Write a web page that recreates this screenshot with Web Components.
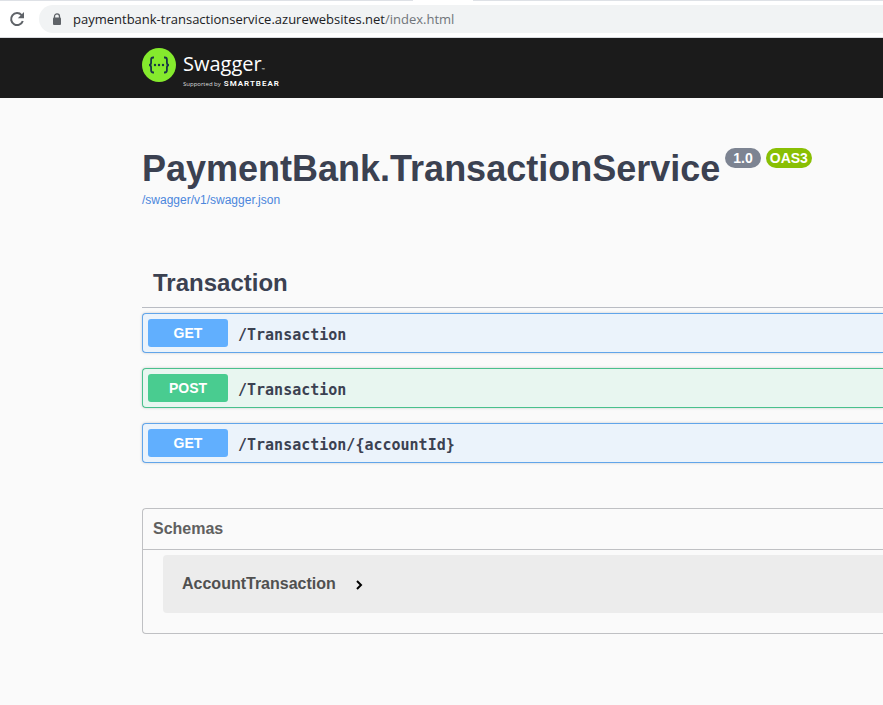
<!DOCTYPE html>
<html lang="en">
<head>
<meta charset="utf-8">
<title>Swagger UI</title>
<style>
body{margin:0;background:#fafafa;color:#3b4151;font-family:"Liberation Sans",Arial,sans-serif;min-height:100vh;overflow-x:hidden}
main{display:block;padding:49px 0 48px 142px}
</style>
</head>
<body>
<browser-bar host="paymentbank-transactionservice.azurewebsites.net" path="/index.html"></browser-bar>
<swagger-topbar></swagger-topbar>
<main>
  <api-info version="1.0" spec="OAS3" href="/swagger/v1/swagger.json">PaymentBank.TransactionService</api-info>
  <api-tag name="Transaction">
    <api-operation method="GET">/Transaction</api-operation>
    <api-operation method="POST">/Transaction</api-operation>
    <api-operation method="GET">/Transaction/{accountId}</api-operation>
  </api-tag>
  <api-schemas>
    <api-model>AccountTransaction</api-model>
  </api-schemas>
</main>
<script>
function define(name, html, setup) {
  const template = document.createElement('template');
  template.innerHTML = html;
  customElements.define(name, class extends HTMLElement {
    constructor() {
      super();
      this.attachShadow({mode: 'open'}).append(template.content.cloneNode(true));
    }
    connectedCallback() {
      if (setup) setup(this, s => this.shadowRoot.querySelector(s));
    }
  });
}

define('browser-bar', `
<style>
:host{display:block;background:#fff;border-bottom:1px solid #dadce0}
.tabs{display:flex;height:1px}
.tabs i{background:#dee1e6;width:413px}
.tabs i:last-child{margin-left:60px;flex:1}
.bar{display:flex;align-items:center;padding:4px 0 4px 8px;gap:13px}
button{border:0;background:none;padding:0;width:18px;height:18px;display:block}
svg{display:block}
.site{flex:1;display:flex;align-items:center;gap:11px;height:28px;padding-left:13px;background:#f1f3f4;border-radius:14px 0 0 14px}
a{font:13px/20px "Open Sans","Noto Sans",sans-serif;color:#202124;text-decoration:none;white-space:nowrap}
.path{color:#70757a}
</style>
<div class="tabs"><i></i><i></i></div>
<div class="bar">
  <button aria-label="Reload"><svg width="18" height="18" viewBox="0 0 18 18"><path d="M13.6 5.1A6 6 0 1 0 14.8 11" fill="none" stroke="#5f6368" stroke-width="2"/><path d="M16 2v6.2H9.800z" fill="#5f6368"/></svg></button>
  <div class="site">
    <svg width="10" height="13" viewBox="0 0 10 13"><path d="M2.500 5V3.400a2.500 2.500 0 0 1 5 0V5" fill="none" stroke="#5f6368" stroke-width="1.300"/><rect x="1" y="4.500" width="8" height="7.500" rx="1" fill="#5f6368"/></svg>
    <a href="#"><span class="host"></span><span class="path"></span></a>
  </div>
</div>`, (el, $) => {
  $('.host').textContent = el.getAttribute('host');
  $('.path').textContent = el.getAttribute('path');
});

define('swagger-topbar', `
<style>
:host{display:block;background:#1b1b1b;padding:10px 0 8px 142px}
a{display:flex;width:fit-content;gap:7px;color:#fff;text-decoration:none}
svg{display:block}
.words{display:flex;flex-direction:column;padding-top:2px}
.name{font:400 20px/28px "Open Sans","Noto Sans",sans-serif}
.name small{font-size:4px;line-height:0}
.by{display:flex;align-items:baseline;gap:3px;font:6px/12px "Open Sans","Noto Sans",sans-serif;color:#ddd}
.by b{font:600 8px/12px Roboto,sans-serif;letter-spacing:1px;color:#fff}
</style>
<a href="#">
  <svg width="34" height="34" viewBox="0 0 34 34"><circle cx="17" cy="17" r="17" fill="#85ea2d"/><g fill="none" stroke="#173647" stroke-width="1.800"><path d="M12 9.500h-.8c-1.500 0-2.100.8-2.100 2.200v2.700c0 1.600-.6 2.500-2 2.600 1.400.1 2 1 2 2.600v2.700c0 1.400.6 2.200 2.100 2.200h.8M22 9.500h.8c1.500 0 2.100.8 2.100 2.200v2.700c0 1.600.6 2.500 2 2.600-1.400.1-2 1-2 2.600v2.700c0 1.400-.6 2.200-2.100 2.200H22"/></g><g fill="#173647"><circle cx="13" cy="17" r="1.200"/><circle cx="17" cy="17" r="1.200"/><circle cx="21" cy="17" r="1.200"/></g></svg>
  <span class="words"><span class="name">Swagger<small>™</small></span><span class="by">Supported by <b>SMARTBEAR</b></span></span>
</a>`);

define('api-info', `
<style>
:host{display:block}
.row{display:flex;align-items:flex-start;gap:5px}
h2{margin:0;font-size:36px;line-height:44px;font-weight:700}
.badge{margin-top:1px;border-radius:10px;font-size:14px;line-height:20px;font-weight:700;color:#fff;background:#7d8492;padding:0 8px}
.spec{background:#89bf04;padding:0 4px}
a{display:block;width:fit-content;font-size:12px;line-height:18px;color:#4b86dc;text-decoration:none}
</style>
<div class="row"><h2><slot></slot></h2><span class="badge version"></span><span class="badge spec"></span></div>
<a></a>`, (el, $) => {
  $('.version').textContent = el.getAttribute('version');
  $('.spec').textContent = el.getAttribute('spec');
  $('a').href = el.getAttribute('href');
  $('a').textContent = el.getAttribute('href');
});

define('api-tag', `
<style>
:host{display:block;margin-top:51px}
h3{margin:0 0 5px;padding:8px 10px 9px 11px;font-size:24px;line-height:30px;border-bottom:1px solid #b9bcc3}
.list{display:flex;flex-direction:column;gap:15px}
</style>
<h3></h3><div class="list"><slot></slot></div>`, (el, $) => {
  $('h3').textContent = el.getAttribute('name');
});

define('api-operation', `
<style>
:host{display:block;--c:#61affe;--line:#61a5ea;--bg:#ebf3fb}
:host([method="POST"]){--c:#49cc90;--line:#49c08d;--bg:#e8f6f0}
button{display:flex;align-items:center;gap:10px;width:100%;padding:5px;border:1px solid var(--line);border-right:0;border-radius:4px 0 0 4px;background:var(--bg);box-shadow:0 0 3px rgba(0,0,0,.19);color:#3b4151;text-align:left}
.method{width:80px;border-radius:3px;background:var(--c);color:#fff;font:700 14px/28px "Liberation Sans",Arial,sans-serif;text-align:center}
.path{font:700 15px/20px "DejaVu Sans Mono",monospace;padding-top:3px}
</style>
<button><span class="method"></span><span class="path"><slot></slot></span></button>`, (el, $) => {
  $('.method').textContent = el.getAttribute('method');
});

define('api-schemas', `
<style>
:host{display:block;margin-top:45px;border:1px solid #bfc0c3;border-right:0;border-radius:4px 0 0 4px}
h4{margin:0;padding:10px;font-size:16px;line-height:20px;color:#606060;border-bottom:1px solid #bfc0c3}
.body{padding:5px 0 20px 20px}
</style>
<h4>Schemas</h4><div class="body"><slot></slot></div>`);

define('api-model', `
<style>
:host{display:block;background:#ececec;border-radius:4px 0 0 4px;padding:19px}
button{display:flex;align-items:center;gap:20px;padding:0;border:0;background:none;font:700 16px/20px "Liberation Sans",Arial,sans-serif;color:#505050}
svg{display:block;margin-top:2px}
</style>
<button><slot></slot><svg width="7" height="10" viewBox="0 0 7 10"><path d="M1 1l4 4-4 4" fill="none" stroke="#000" stroke-width="2"/></svg></button>`);
</script>
</body>
</html>
